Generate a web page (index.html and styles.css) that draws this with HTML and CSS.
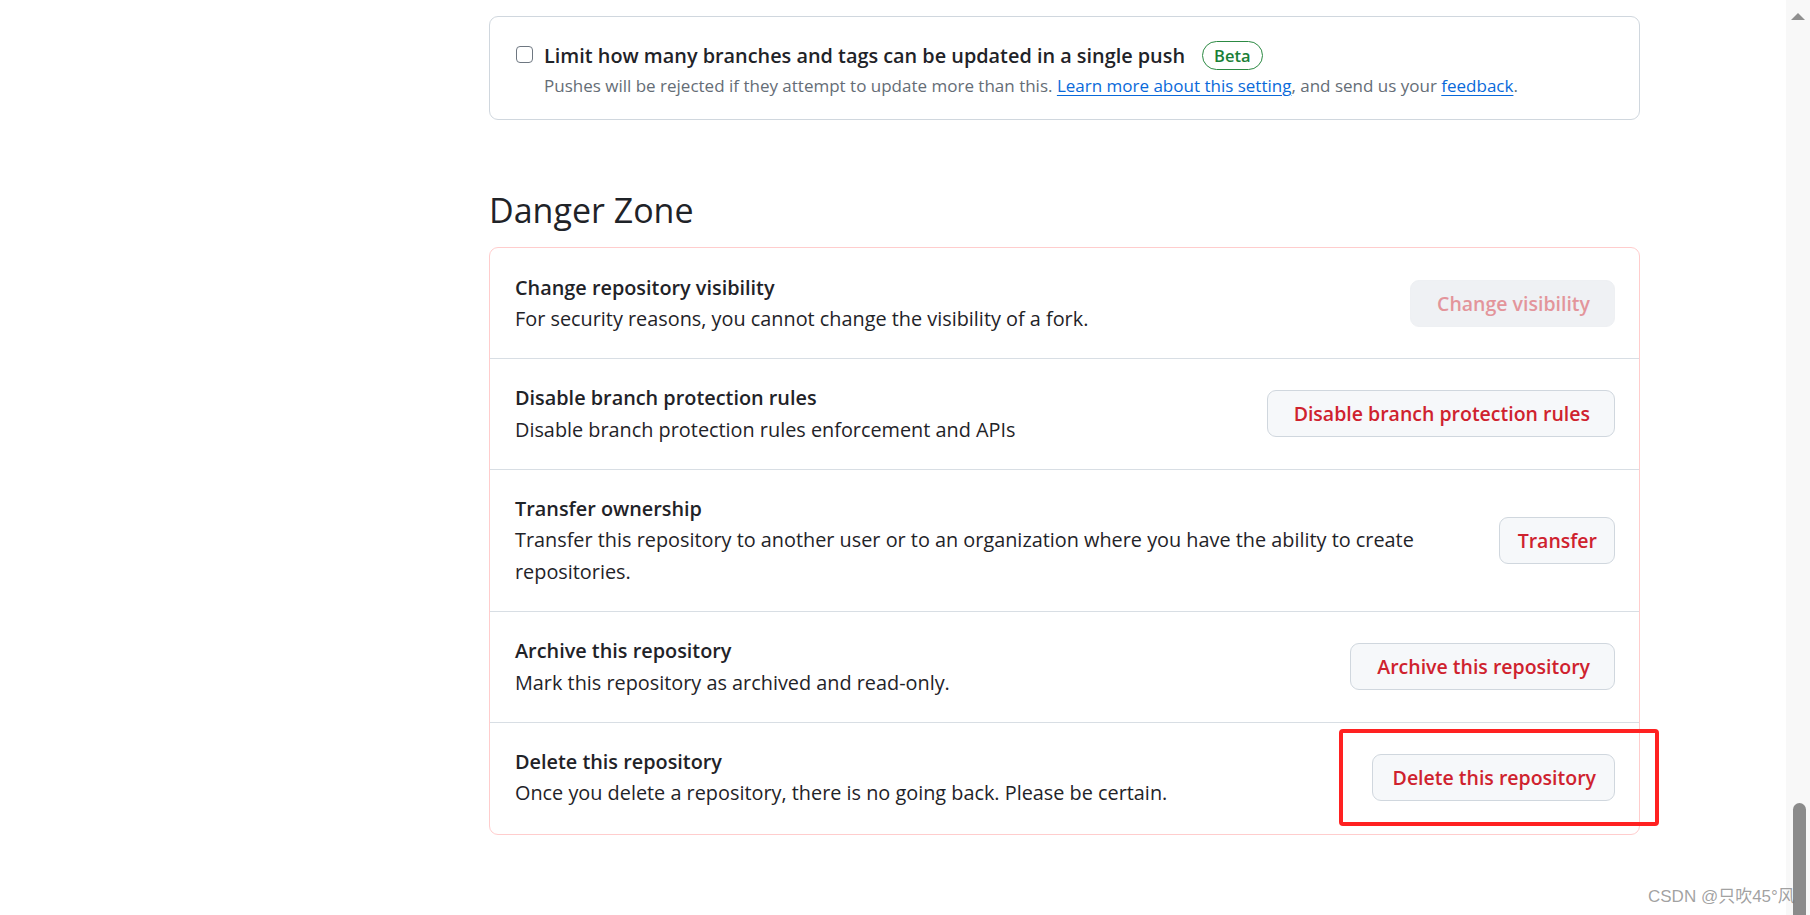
FILE: index.html
```html
<!DOCTYPE html>
<html lang="en">
<head>
<meta charset="utf-8">
<title>Danger Zone</title>
<link rel="stylesheet" href="styles.css">
</head>
<body>
<div class="page">
  <main class="content">
    <div class="push-box">
      <div class="push-row">
        <input type="checkbox" class="check">
        <div class="push-text">
          <div class="push-title">
            <span>Limit how many branches and tags can be updated in a single push</span>
            <span class="beta">Beta</span>
          </div>
          <p class="push-note">Pushes will be rejected if they attempt to update more than this. <a href="#">Learn more about this setting</a>, and send us your <a href="#">feedback</a>.</p>
        </div>
      </div>
    </div>

    <h2 class="danger-heading">Danger Zone</h2>

    <div class="danger-box">
      <div class="danger-row">
        <div class="row-text">
          <strong class="row-title">Change repository visibility</strong>
          <p class="row-desc">For security reasons, you cannot change the visibility of a fork.</p>
        </div>
        <button class="btn btn-disabled" type="button">Change visibility</button>
      </div>
      <div class="danger-row">
        <div class="row-text">
          <strong class="row-title">Disable branch protection rules</strong>
          <p class="row-desc">Disable branch protection rules enforcement and APIs</p>
        </div>
        <button class="btn" type="button">Disable branch protection rules</button>
      </div>
      <div class="danger-row">
        <div class="row-text">
          <strong class="row-title">Transfer ownership</strong>
          <p class="row-desc">Transfer this repository to another user or to an organization where you have the ability to create repositories.</p>
        </div>
        <button class="btn btn-compact btn-transfer" type="button">Transfer</button>
      </div>
      <div class="danger-row">
        <div class="row-text">
          <strong class="row-title">Archive this repository</strong>
          <p class="row-desc">Mark this repository as archived and read-only.</p>
        </div>
        <button class="btn" type="button">Archive this repository</button>
      </div>
      <div class="danger-row">
        <div class="row-text">
          <strong class="row-title">Delete this repository</strong>
          <p class="row-desc">Once you delete a repository, there is no going back. Please be certain.</p>
        </div>
        <button class="btn btn-compact" type="button">Delete this repository</button>
      </div>
    </div>
  </main>

  <div class="scrollbar">
    <span class="scroll-arrow"></span>
    <span class="scroll-thumb"></span>
  </div>
</div>

<div class="annotation"></div>
<div class="watermark">CSDN @只吹45°风</div>
</body>
</html>
```

FILE: styles.css
```css
html, body {
  margin: 0;
  padding: 0;
  background: #ffffff;
}

body {
  font-family: "Open Sans", "Noto Sans", sans-serif;
  color: #1f2328;
  position: relative;
  width: 1810px;
  height: 915px;
  overflow: hidden;
}

.page {
  display: flex;
  height: 915px;
}

.content {
  margin-left: 489px;
  width: 1151px;
  padding-top: 16px;
}

/* top push limit box */
.push-box {
  border: 1px solid #d0d7de;
  border-radius: 9px;
  padding: 23px 26px 20px 26px;
}

.push-row {
  display: flex;
  align-items: flex-start;
  gap: 11px;
}

.check {
  appearance: none;
  -webkit-appearance: none;
  margin: 6px 0 0 0;
  width: 17px;
  height: 17px;
  border: 1.5px solid #6e7781;
  border-radius: 4px;
  background: #ffffff;
  flex: none;
  box-sizing: border-box;
}

.push-title {
  display: flex;
  align-items: center;
  gap: 17px;
  font-size: 19.85px;
  font-weight: 600;
  line-height: 31.5px;
}

.beta {
  display: inline-flex;
  align-items: center;
  height: 29px;
  box-sizing: border-box;
  padding: 0 12px 0 11px;
  border: 1.5px solid #2c8a43;
  border-radius: 15px;
  color: #1a7f37;
  font-size: 16.5px;
  font-weight: 600;
  line-height: 1;
}

.push-note {
  margin: 0;
  font-size: 17px;
  line-height: 27px;
  color: #656d76;
}

.push-note a {
  color: #0969da;
  text-decoration: underline;
  text-decoration-thickness: 1px;
  text-underline-offset: 3px;
}

/* danger zone */
.danger-heading {
  margin: 69px 0 15px 0;
  font-size: 34px;
  font-weight: 400;
  line-height: 43px;
  color: #1f2328;
}

.danger-box {
  border: 1px solid #ffcdcd;
  border-radius: 9px;
}

.danger-row {
  display: flex;
  align-items: center;
  padding: 23px 24px 23px 25px;
  border-top: 1px solid #d8dee4;
}

.danger-row:first-child {
  border-top: none;
  padding-top: 24px;
}

.danger-row:last-child {
  padding-bottom: 25px;
}

.row-text {
  flex: 1;
  margin-right: 24px;
}

.row-title {
  display: block;
  font-size: 19.85px;
  font-weight: 600;
  line-height: 31.5px;
}

.row-desc {
  margin: 0;
  font-size: 19.85px;
  line-height: 32px;
}

.btn {
  flex: none;
  height: 47px;
  padding: 0 24px 0 26px;
  border: 1px solid #d0d7de;
  border-radius: 9px;
  background: #f6f8fa;
  color: #cf222e;
  font-family: "Open Sans", "Noto Sans", sans-serif;
  font-size: 19.5px;
  font-weight: 600;
  line-height: 1;
}

.btn-compact {
  padding: 0 18px 0 20px;
}

.btn-transfer {
  padding: 0 17px 0 18px;
}

.btn-disabled {
  background: #eff1f4;
  border-color: #eef0f3;
  color: #e3959b;
}

/* scrollbar */
.scrollbar {
  margin-left: auto;
  width: 24px;
  background: #f8f8f8;
  display: flex;
  flex-direction: column;
  justify-content: space-between;
  align-items: center;
}

.scroll-arrow {
  margin-top: 13px;
  width: 0;
  height: 0;
  border-left: 7px solid transparent;
  border-right: 7px solid transparent;
  border-bottom: 7px solid #8f8f8f;
}

.scroll-thumb {
  width: 13px;
  height: 112px;
  background: #8b8b8b;
  border-radius: 7px 7px 0 0;
  margin-left: 2px;
}

/* overlays */
.annotation {
  position: absolute;
  left: 1339px;
  top: 729px;
  width: 320px;
  height: 97px;
  box-sizing: border-box;
  border: 4px solid #ff2121;
  border-radius: 4px;
}

.watermark {
  position: absolute;
  left: 1648px;
  top: 885px;
  font-family: "Liberation Sans", "Noto Sans CJK SC", sans-serif;
  font-size: 17px;
  line-height: 24px;
  color: rgba(120, 120, 120, 0.7);
  white-space: nowrap;
}
```
